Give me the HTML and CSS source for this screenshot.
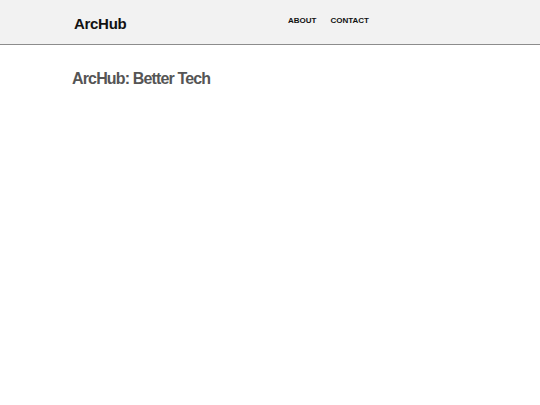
FILE: index.html
```html
<!DOCTYPE html>
<html>
<head>
<meta charset="utf-8">
<link rel="stylesheet" href="styles.css">
</head>
<body>
<header class="site-header">
  <div class="header-inner">
    <div class="logo">ArcHub</div>
    <nav class="nav">
      <a href="#" class="nav-link">ABOUT</a>
      <a href="#" class="nav-link">CONTACT</a>
    </nav>
  </div>
</header>
<main class="content">
  <h1 class="title">ArcHub: Better Tech</h1>
</main>
</body>
</html>
```
FILE: styles.css
```css
html, body {
  margin: 0;
  padding: 0;
  background: #ffffff;
  font-family: "Liberation Sans", Arial, sans-serif;
}
.site-header {
  background: #f2f2f2;
  height: 44px;
  border-bottom: 1px solid #8c8c8c;
}
.header-inner {
  display: flex;
  align-items: center;
  height: 100%;
  padding-left: 74px;
}
.logo {
  font-size: 15px;
  font-weight: bold;
  color: #111;
  letter-spacing: -0.3px;
  width: 214px;
  padding-top: 2px;
}
.nav {
  display: flex;
  gap: 14px;
  margin-bottom: 4px;
}
.nav-link {
  font-size: 8px;
  font-weight: bold;
  color: #111;
  text-decoration: none;
  letter-spacing: 0;
}
.content {
  padding-left: 72px;
  padding-top: 25px;
}
.title {
  margin: 0;
  font-size: 16px;
  font-weight: bold;
  color: #555;
  letter-spacing: -0.85px;
}
```
